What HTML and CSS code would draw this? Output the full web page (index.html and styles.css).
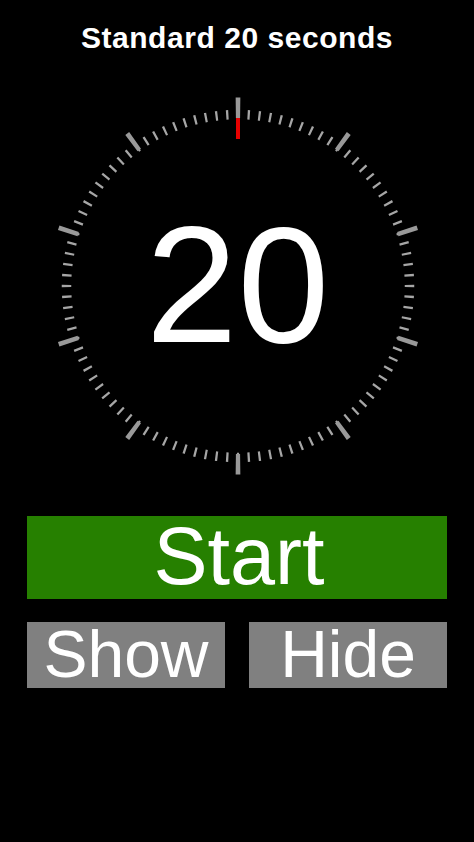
FILE: index.html
```html
<!DOCTYPE html>
<html>
<head>
<meta charset="utf-8">
<link rel="stylesheet" href="styles.css">
</head>
<body>
<div class="app">
  <h1 class="title">Standard 20 seconds</h1>
  <div class="dial">
    <svg class="ticks" width="380" height="380" viewBox="-190 -190 380 380">
      <g transform="rotate(-90)">
        <circle r="171.5" fill="none" stroke="#a6a6a6" stroke-width="9.5" pathLength="1000" stroke-dasharray="2.1 7.9" stroke-dashoffset="1.05"/>
        <circle r="178.25" fill="none" stroke="#999" stroke-width="20.5" pathLength="1000" stroke-dasharray="4.02 95.98" stroke-dashoffset="2.01"/>
      </g>
      <line x1="0" y1="-147" x2="0" y2="-168" stroke="#e60000" stroke-width="4"/>
    </svg>
    <div class="count">20</div>
  </div>
  <div class="controls">
    <button class="btn start">Start</button>
    <div class="row">
      <button class="btn gray">Show</button>
      <button class="btn gray">Hide</button>
    </div>
  </div>
</div>
</body>
</html>
```
FILE: styles.css
```css
html, body {
  margin: 0;
  padding: 0;
  background: #000;
}
body {
  font-family: "Liberation Sans", Arial, sans-serif;
  color: #fff;
  width: 474px;
  height: 842px;
  overflow: hidden;
}
.app {
  display: flex;
  flex-direction: column;
  align-items: center;
}
.title {
  margin: 21px 0 0;
  font-size: 30px;
  letter-spacing: 0.55px;
  line-height: 34px;
  font-weight: bold;
  text-align: center;
}
.dial {
  position: relative;
  width: 380px;
  height: 380px;
  margin-top: 41px;
  margin-left: 1px;
}
.ticks {
  display: block;
}
.count {
  position: absolute;
  inset: 0;
  display: flex;
  align-items: center;
  justify-content: center;
  font-size: 165px;
  line-height: 1;
  padding-bottom: 2px;
}
.controls {
  width: 420px;
  margin-top: 40px;
  display: flex;
  flex-direction: column;
  gap: 23px;
}
.btn {
  border: none;
  margin: 0;
  padding: 0;
  color: #fff;
  font-family: "Liberation Sans", Arial, sans-serif;
  display: flex;
  align-items: center;
  justify-content: center;
}
.start {
  height: 83px;
  background: #268000;
  font-size: 81px;
  padding-bottom: 2px;
  padding-left: 4px;
}
.row {
  display: grid;
  grid-template-columns: 1fr 1fr;
  gap: 24px;
}
.gray {
  height: 66px;
  background: #808080;
  font-size: 66px;
  padding-bottom: 2px;
}
```
